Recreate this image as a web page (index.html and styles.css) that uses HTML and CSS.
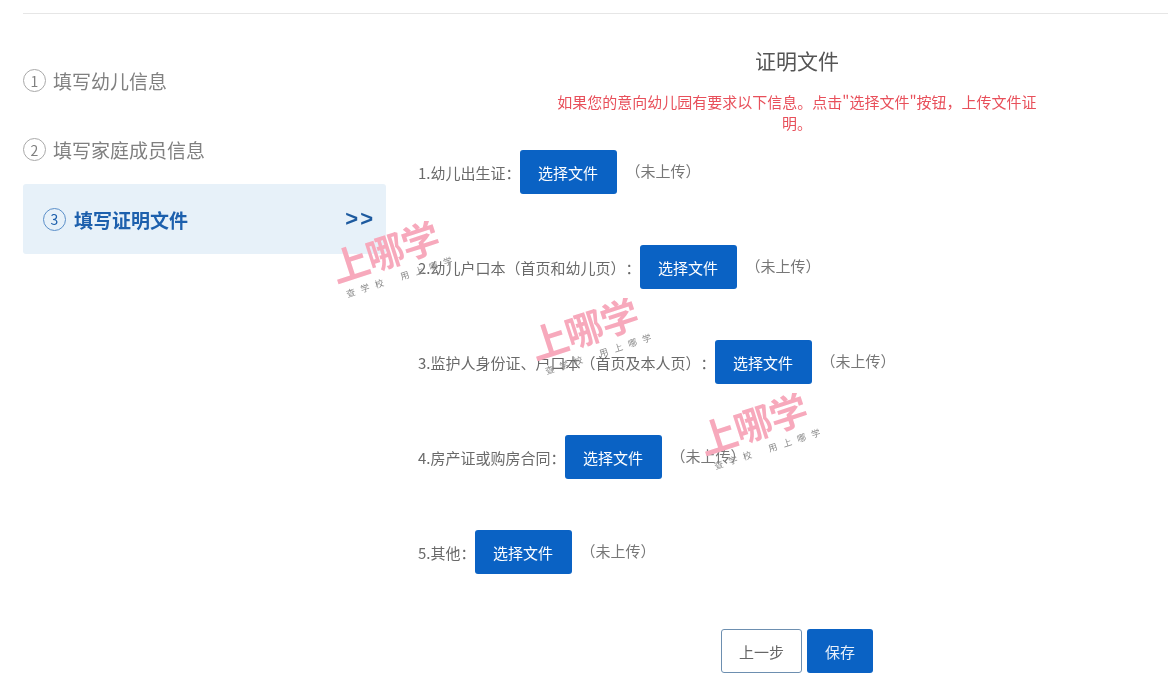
FILE: index.html
```
<!DOCTYPE html>
<html lang="zh-CN">
<head>
<meta charset="utf-8">
<title>证明文件</title>
<link rel="stylesheet" href="styles.css">
</head>
<body>
<div class="page">
  <div class="rule"></div>
  <div class="layout">
    <nav class="steps">
      <div class="step step-one"><span class="num">1</span><span>填写幼儿信息</span></div>
      <div class="step step-two"><span class="num">2</span><span>填写家庭成员信息</span></div>
      <div class="step active"><span class="num">3</span><span class="step-label">填写证明文件</span><span class="arrows">&gt;&gt;</span></div>
    </nav>
    <main class="main">
      <h1 class="title">证明文件</h1>
      <p class="notice">如果您的意向幼儿园有要求以下信息。点击"选择文件"按钮，上传文件证明。</p>
      <div class="row"><span class="label">1.幼儿出生证：</span><button class="btn">选择文件</button><span class="status">（未上传）</span></div>
      <div class="row"><span class="label">2.幼儿户口本（首页和幼儿页）：</span><button class="btn">选择文件</button><span class="status">（未上传）</span></div>
      <div class="row"><span class="label">3.监护人身份证、户口本（首页及本人页）：</span><button class="btn">选择文件</button><span class="status">（未上传）</span></div>
      <div class="row"><span class="label">4.房产证或购房合同：</span><button class="btn">选择文件</button><span class="status">（未上传）</span></div>
      <div class="row"><span class="label">5.其他：</span><button class="btn">选择文件</button><span class="status">（未上传）</span></div>
      <div class="actions"><button class="action prev">上一步</button><button class="action save">保存</button></div>
    </main>
  </div>
  <div class="mark mark-a"><div class="mark-big">上哪学</div><div class="mark-small"><span>查学校</span><span>用上哪学</span></div></div>
  <div class="mark mark-b"><div class="mark-big">上哪学</div><div class="mark-small"><span>查学校</span><span>用上哪学</span></div></div>
  <div class="mark mark-c"><div class="mark-big">上哪学</div><div class="mark-small"><span>查学校</span><span>用上哪学</span></div></div>
</div>
</body>
</html>
```
FILE: styles.css
```
* { box-sizing: border-box; }
html, body { margin: 0; padding: 0; }
body {
  width: 1168px;
  height: 684px;
  overflow: hidden;
  background: #fff;
  font-family: "Noto Sans CJK SC", "Noto Sans", sans-serif;
  color: #666;
  text-spacing-trim: space-all;
}
.page { position: relative; width: 1168px; height: 684px; overflow: hidden; padding: 13px 0 0 23px; filter: blur(0.45px); }
.rule { height: 1px; background: #e6e6e6; }
.layout { display: flex; align-items: flex-start; }
.steps { width: 363px; flex: none; padding-top: 32px; }
.step { display: flex; align-items: center; gap: 7px; height: 69px; font-size: 19px; color: #808080; }
.num {
  width: 23px; height: 23px; flex: none;
  display: flex; align-items: center; justify-content: center;
  border: 1.5px solid #a8a8a8; border-radius: 50%;
  font-size: 14px; line-height: 1; color: #808080;
}
.active {
  height: 70px; gap: 8px; padding: 0 11px 0 20px;
  background: #e7f1f9; border-radius: 3px;
  color: #1d60ad; font-weight: 700;
}
.active .num { border-color: #5b8fc9; color: #1d60ad; font-weight: 400; }
.step-label { flex: 1; }
.arrows { font-size: 22px; letter-spacing: 2px; color: #1d5a9f; font-family: "Liberation Sans", sans-serif; }
.main { width: 758px; flex: none; margin-left: 32px; }
.title { margin: 31px 0 0; font-size: 21px; font-weight: 400; line-height: 30px; text-align: center; color: #555; }
.notice { width: 490px; margin: 16px auto 0; font-size: 15px; line-height: 21px; text-align: center; color: #e8505b; }
.row { display: flex; align-items: center; height: 44px; margin-bottom: 51px; font-size: 15px; }
.notice + .row { margin-top: 17px; }
.label { color: #6a6a6a; margin-right: -1px; }
.btn {
  width: 97px; height: 44px; padding: 0; border: 0; border-radius: 3px;
  background: #0a62c4; color: #fff; font: inherit; font-size: 15px;
}
.status { margin-left: 9px; margin-bottom: 3px; color: #777; }
.actions { display: flex; justify-content: flex-start; gap: 5px; margin: 55px 0 0 303px; }
.action { height: 44px; border-radius: 3px; font: inherit; font-size: 15px; padding: 0; }
.prev { width: 81px; background: #fff; border: 1px solid #6d8fb0; color: #666; }
.save { width: 66px; background: #0a62c4; border: 0; color: #e8f0fa; }
.mark { position: absolute; width: 125px; transform: rotate(-18deg); transform-origin: left top; pointer-events: none; }
.mark-a { left: 325px; top: 248px; }
.mark-b { left: 524px; top: 325px; }
.mark-c { left: 693px; top: 420px; }
.mark-big { font-size: 38px; line-height: 42px; letter-spacing: -1px; color: #f7a9bc; font-weight: 700; white-space: nowrap; }
.mark-small { display: flex; gap: 12px; margin-top: 3px; padding-left: 6px; font-size: 9px; line-height: 12px; letter-spacing: 6px; color: #8a8a8a; white-space: nowrap; }
```
